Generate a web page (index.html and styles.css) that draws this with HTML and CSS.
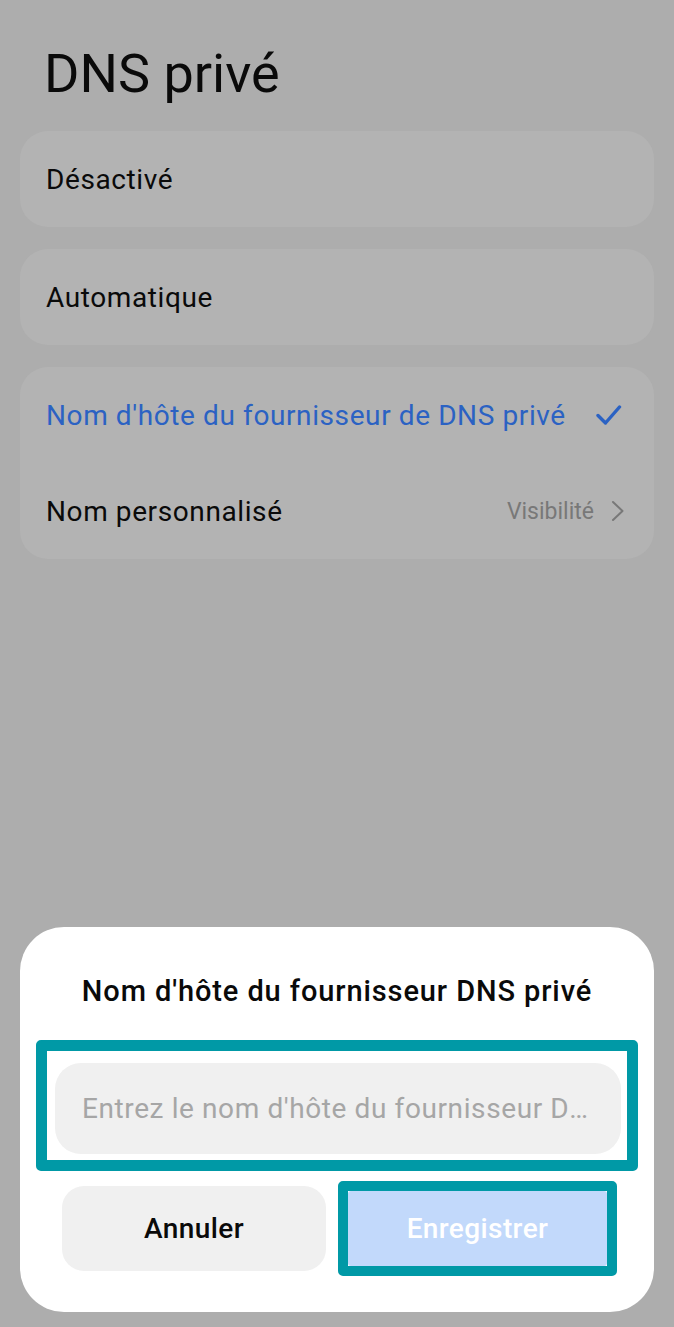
FILE: index.html
```html
<!DOCTYPE html>
<html lang="fr">
  <head>
    <meta charset="UTF-8" />
    <meta name="viewport" content="width=device-width, initial-scale=1.0" />
    <title>DNS privé</title>
    <link rel="stylesheet" href="styles.css">
  </head>
  <body>
    <div class="page">
      <h1 class="page-title">DNS privé</h1>

      <div class="card">
        <div class="row">Désactivé</div>
      </div>

      <div class="card">
        <div class="row">Automatique</div>
      </div>

      <div class="card">
        <div class="row row-selected">
          <span>Nom d'hôte du fournisseur de DNS privé</span>
          <svg class="check" width="26" height="22" viewBox="0 0 26 22">
            <path d="M2 11.5 L9.5 19 L23.5 3" fill="none" stroke="currentColor" stroke-width="3.4" stroke-linecap="round" stroke-linejoin="round" />
          </svg>
        </div>
        <div class="row">
          <span>Nom personnalisé</span>
          <span class="row-meta">
            Visibilité
            <svg class="chevron" width="14" height="22" viewBox="0 0 14 22">
              <path d="M2 2 L11.5 11 L2 20" fill="none" stroke="currentColor" stroke-width="2" stroke-linecap="round" stroke-linejoin="round" />
            </svg>
          </span>
        </div>
      </div>

      <div class="dialog">
        <h2 class="dialog-title">Nom d'hôte du fournisseur DNS privé</h2>

        <div class="highlight highlight-field">
          <input class="field" type="text" placeholder="Entrez le nom d'hôte du fournisseur DNS privé" />
        </div>

        <div class="actions">
          <button class="btn btn-cancel" type="button">Annuler</button>
          <div class="highlight highlight-btn">
            <button class="btn btn-save" type="button">Enregistrer</button>
          </div>
        </div>
      </div>
    </div>
  </body>
</html>
```

FILE: styles.css
```css
* {
  box-sizing: border-box;
}

html,
body {
  margin: 0;
  background: #adadad;
}

body {
  font-family: Roboto, "Liberation Sans", sans-serif;
  color: #0a0a0a;
}

.page {
  min-height: 100vh;
  display: flex;
  flex-direction: column;
  padding: 42px 20px 15px 20px;
}

.page-title {
  margin: 0 0 25px 0;
  padding-left: 24px;
  font-size: 54px;
  line-height: 64px;
  font-weight: 400;
}

.card {
  background: #b3b3b3;
  border-radius: 28px;
  margin-bottom: 22px;
}

.row {
  height: 96px;
  display: flex;
  align-items: center;
  justify-content: space-between;
  padding: 0 29px 0 26px;
  font-size: 28px;
  letter-spacing: 0.6px;
}

.row-selected {
  color: #2b62c3;
  padding-right: 32px;
}

.row-meta {
  display: flex;
  align-items: center;
  gap: 17px;
  font-size: 23px;
  letter-spacing: 0;
  color: #787878;
}

.check,
.chevron {
  display: block;
}

.dialog {
  margin-top: auto;
  background: #fff;
  border-radius: 44px;
  padding: 46px 16px 36px 16px;
}

.dialog-title {
  margin: 0 0 31px 0;
  text-align: center;
  font-size: 29px;
  line-height: 36px;
  font-weight: 500;
  letter-spacing: 0.9px;
}

.highlight {
  border: 11px solid #0099a6;
  border-radius: 5px;
  background: #fff;
}

.highlight-field {
  padding: 12px 6px 6px 8px;
}

.field {
  display: block;
  width: 100%;
  height: 91px;
  border: 0;
  border-radius: 26px;
  background: #f0f0f0;
  padding: 0 32px 0 27px;
  font-family: inherit;
  font-size: 28px;
  letter-spacing: 0.6px;
  color: #0a0a0a;
  text-overflow: ellipsis;
  outline: none;
}

.field::placeholder {
  color: #a6a6a6;
}

.actions {
  display: flex;
  align-items: center;
  gap: 12px;
  margin-top: 10px;
  padding: 0 19px 0 26px;
}

.btn {
  border: 0;
  font-family: inherit;
  font-size: 28px;
  font-weight: 500;
  letter-spacing: 0.4px;
}

.btn-cancel {
  width: 264px;
  height: 85px;
  border-radius: 22px;
  background: #f0f0f0;
  color: #0a0a0a;
}

.highlight-btn {
  width: 279px;
  height: 95px;
  border-width: 10.5px;
}

.btn-save {
  display: block;
  width: 100%;
  height: 100%;
  border-radius: 3px;
  background: #c2d9fb;
  color: #fff;
}
```
